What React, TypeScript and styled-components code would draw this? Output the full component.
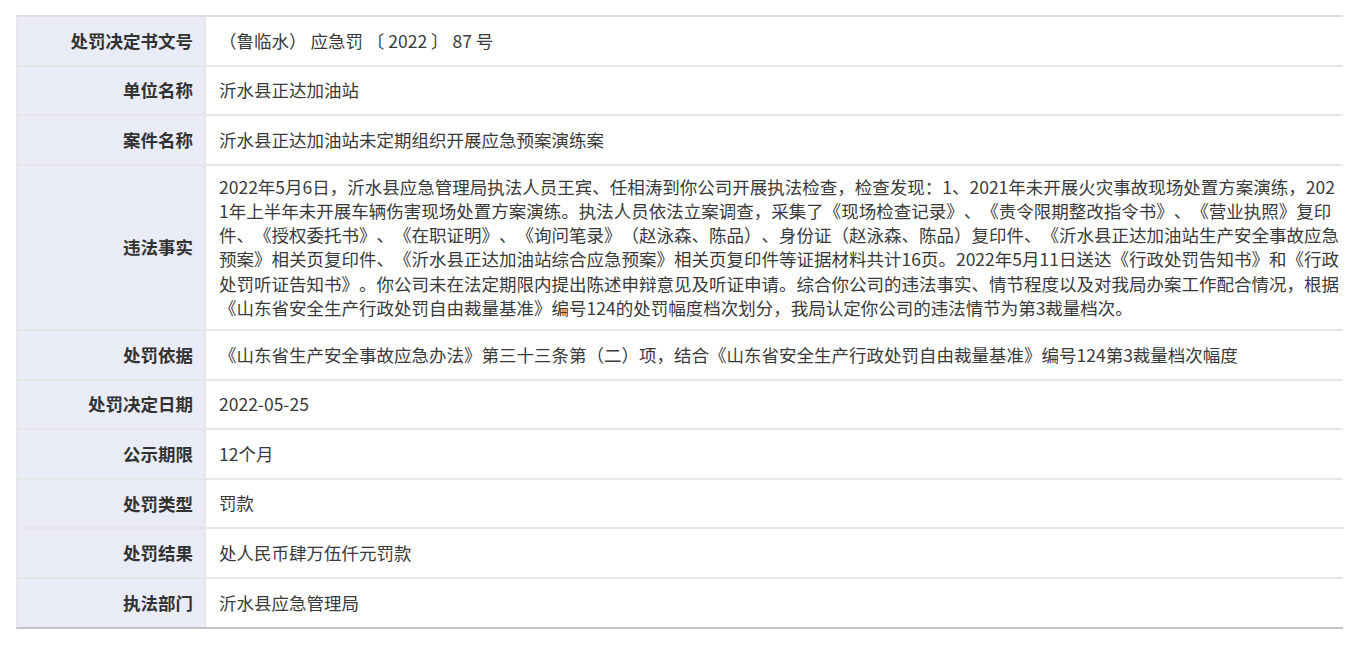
import React from "react";
import styled, { createGlobalStyle } from "styled-components";

const GlobalStyle = createGlobalStyle`
  html, body {
    margin: 0;
    padding: 0;
    background: #ffffff;
  }
  body {
    font-family: "Noto Sans CJK SC", "Microsoft YaHei", "Liberation Sans", sans-serif;
    text-spacing-trim: space-all;
  }
`;

const Page = styled.div`
  padding: 15px 16px 20px 16px;
`;

const Table = styled.div`
  display: grid;
  grid-template-columns: 187px 1fr;
  column-gap: 2px;
  row-gap: 2px;
  background: #e6e6e6;
  border-top: 2px solid #dedede;
  border-bottom: 2px solid #c4c4c4;
  border-left: 1px solid #e6e6e6;
`;

const Label = styled.div`
  background: #e9ecf7;
  color: #333333;
  font-weight: bold;
  font-size: 17.5px;
  line-height: 24px;
  text-align: right;
  padding: 10px 11px 10px 8px;
  display: flex;
  align-items: center;
  justify-content: flex-end;
`;

const Value = styled.div`
  background: #ffffff;
  color: #3a3a3a;
  font-size: 17.5px;
  line-height: 24.2px;
  padding: 9px 0 9px 13px;
  min-height: 29.6px;
  display: flex;
  align-items: center;
  word-break: break-all;
  text-spacing-trim: space-all;
`;

const Text = styled.span`
  display: block;
  margin-right: -1px;
`;

const rows: [string, string][] = [
  ["处罚决定书文号", "（鲁临水） 应急罚 〔 2022 〕 87 号"],
  ["单位名称", "沂水县正达加油站"],
  ["案件名称", "沂水县正达加油站未定期组织开展应急预案演练案"],
  [
    "违法事实",
    "2022年5月6日，沂水县应急管理局执法人员王宾、任相涛到你公司开展执法检查，检查发现：1、2021年未开展火灾事故现场处置方案演练，2021年上半年未开展车辆伤害现场处置方案演练。执法人员依法立案调查，采集了《现场检查记录》、《责令限期整改指令书》、《营业执照》复印件、《授权委托书》、《在职证明》、《询问笔录》（赵泳森、陈品）、身份证（赵泳森、陈品）复印件、《沂水县正达加油站生产安全事故应急预案》相关页复印件、《沂水县正达加油站综合应急预案》相关页复印件等证据材料共计16页。2022年5月11日送达《行政处罚告知书》和《行政处罚听证告知书》。你公司未在法定期限内提出陈述申辩意见及听证申请。综合你公司的违法事实、情节程度以及对我局办案工作配合情况，根据《山东省安全生产行政处罚自由裁量基准》编号124的处罚幅度档次划分，我局认定你公司的违法情节为第3裁量档次。",
  ],
  [
    "处罚依据",
    "《山东省生产安全事故应急办法》第三十三条第（二）项，结合《山东省安全生产行政处罚自由裁量基准》编号124第3裁量档次幅度",
  ],
  ["处罚决定日期", "2022-05-25"],
  ["公示期限", "12个月"],
  ["处罚类型", "罚款"],
  ["处罚结果", "处人民币肆万伍仟元罚款"],
  ["执法部门", "沂水县应急管理局"],
];

export default function App() {
  return (
    <>
      <GlobalStyle />
      <Page>
        <Table>
          {rows.map(([k, v]) => (
            <React.Fragment key={k}>
              <Label>{k}</Label>
              <Value>
                <Text>{v}</Text>
              </Value>
            </React.Fragment>
          ))}
        </Table>
      </Page>
    </>
  );
}
